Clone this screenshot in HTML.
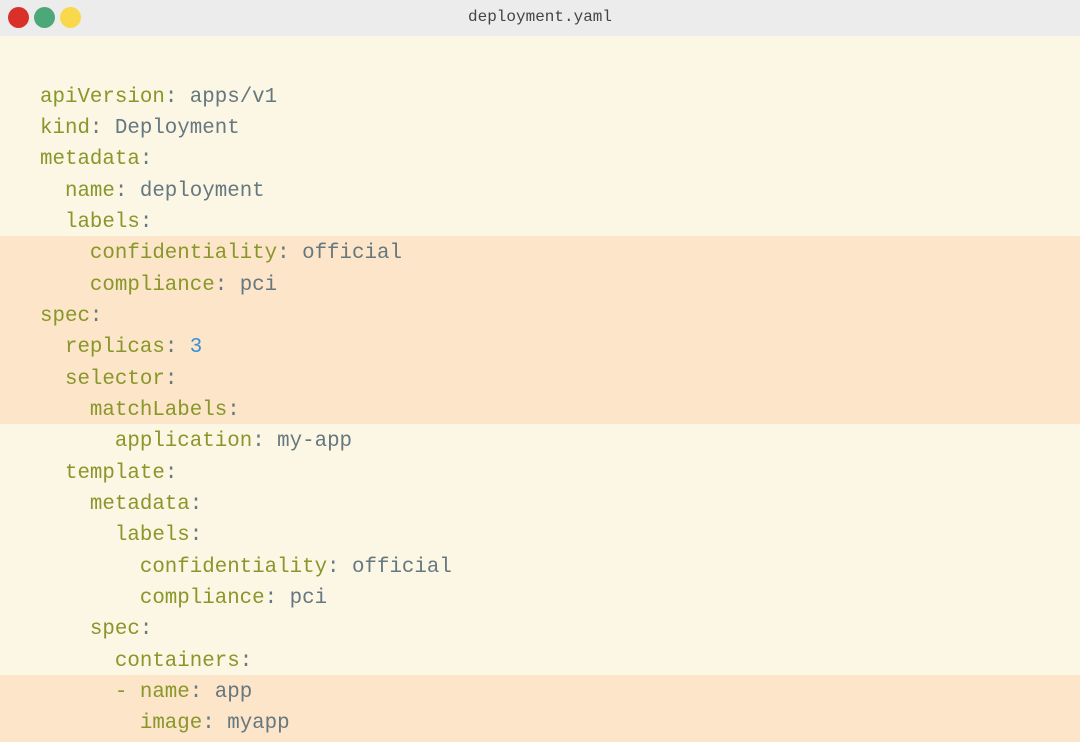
<!DOCTYPE html>
<html><head><style>
html,body{margin:0;padding:0;width:1080px;height:742px;overflow:hidden;background:#fcf6e5;}
.bar{height:36px;background:#ececec;position:relative;}
.dot{position:absolute;top:7px;width:21px;height:21px;border-radius:50%;}
.title{position:absolute;left:0;right:0;top:7px;height:20px;line-height:20px;text-align:center;font-family:"Liberation Mono",monospace;font-size:16px;color:#444;}
.hl{position:absolute;left:0;width:1080px;background:#fce5c8;}
pre{position:absolute;left:40px;top:81.5px;margin:0;font-family:"Liberation Mono",monospace;font-size:20.8px;line-height:31.35px;color:#65787f;}
.k{color:#88972a;}.n{color:#3a8fd6;}
</style></head><body>
<div class="bar">
<div class="dot" style="left:8px;background:#d9302a"></div>
<div class="dot" style="left:34px;background:#4ca879"></div>
<div class="dot" style="left:60px;background:#f9d94b"></div>
<div class="title">deployment.yaml</div>
</div>
<div class="hl" style="top:236px;height:188px"></div>
<div class="hl" style="top:675px;height:67px"></div>
<pre><span class="k">apiVersion</span>: apps/v1
<span class="k">kind</span>: Deployment
<span class="k">metadata</span>:
  <span class="k">name</span>: deployment
  <span class="k">labels</span>:
    <span class="k">confidentiality</span>: official
    <span class="k">compliance</span>: pci
<span class="k">spec</span>:
  <span class="k">replicas</span>: <span class="n">3</span>
  <span class="k">selector</span>:
    <span class="k">matchLabels</span>:
      <span class="k">application</span>: my-app
  <span class="k">template</span>:
    <span class="k">metadata</span>:
      <span class="k">labels</span>:
        <span class="k">confidentiality</span>: official
        <span class="k">compliance</span>: pci
    <span class="k">spec</span>:
      <span class="k">containers</span>:
      <span class="k">- name</span>: app
        <span class="k">image</span>: myapp
</pre>
</body></html>
